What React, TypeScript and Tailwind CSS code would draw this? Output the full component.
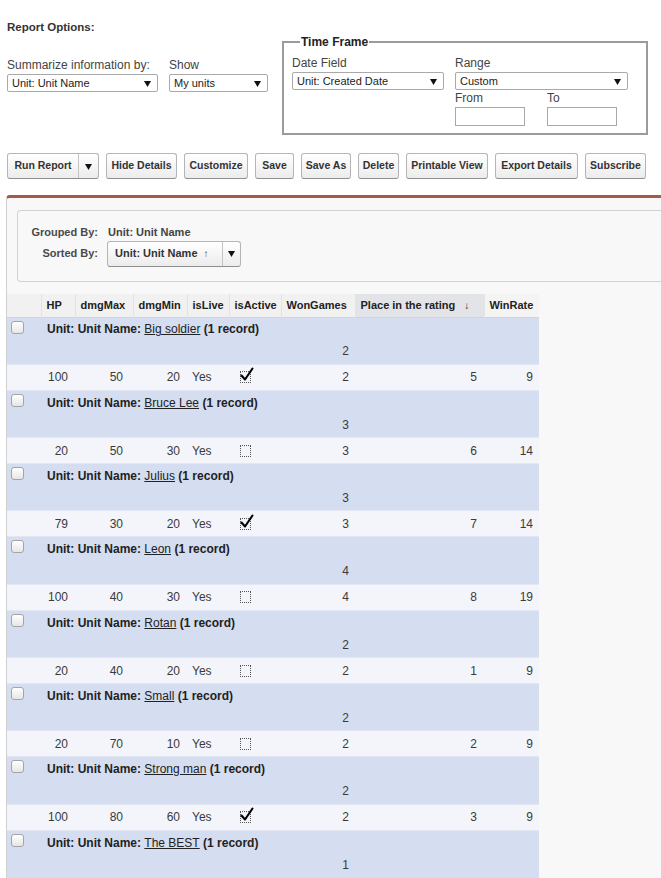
import React from 'react';

type Unit = {
  name: string;
  won: number;
  hp: number;
  max: number;
  min: number;
  active: boolean;
  place: number;
  rate: number;
};

const units: Unit[] = [
  { name: 'Big soldier', won: 2, hp: 100, max: 50, min: 20, active: true, place: 5, rate: 9 },
  { name: 'Bruce Lee', won: 3, hp: 20, max: 50, min: 30, active: false, place: 6, rate: 14 },
  { name: 'Julius', won: 3, hp: 79, max: 30, min: 20, active: true, place: 7, rate: 14 },
  { name: 'Leon', won: 4, hp: 100, max: 40, min: 30, active: false, place: 8, rate: 19 },
  { name: 'Rotan', won: 2, hp: 20, max: 40, min: 20, active: false, place: 1, rate: 9 },
  { name: 'Small', won: 2, hp: 20, max: 70, min: 10, active: false, place: 2, rate: 9 },
  { name: 'Strong man', won: 2, hp: 100, max: 80, min: 60, active: true, place: 3, rate: 9 },
  { name: 'The BEST', won: 1, hp: 100, max: 90, min: 70, active: true, place: 4, rate: 5 },
];

function Arrow({ className = '' }: { className?: string }) {
  return (
    <svg className={`w-[7px] h-[7px] ${className}`} viewBox="0 0 8 8">
      <path d="M0 1h8L4 8z" fill="#111" />
    </svg>
  );
}

function Select({ value, className = '' }: { value: string; className?: string }) {
  return (
    <div
      className={`flex items-center justify-between bg-white border border-[#a9a9a9] rounded-[2px] pl-[4px] pr-[6px] text-[11px] text-[#222] ${className}`}
    >
      <span>{value}</span>
      <Arrow />
    </div>
  );
}

function Btn({ label, className = '' }: { label: string; className?: string }) {
  return (
    <div
      className={`h-[26px] flex items-center justify-center whitespace-nowrap rounded-[3px] border border-[#b5b5b5] border-b-[#8f8f8f] bg-gradient-to-b from-white to-[#ececec] text-[10.5px] font-bold text-[#333] ${className}`}
    >
      {label}
    </div>
  );
}

function GroupCheckbox() {
  return (
    <span className="block w-[13px] h-[13px] rounded-[3px] border border-[#a4a4a4] bg-gradient-to-b from-white to-[#e6e6e6]" />
  );
}

function ActiveBox({ on }: { on: boolean }) {
  return (
    <span className="relative block w-[11px] h-[12px] border border-dotted border-[#555]">
      {on && (
        <svg className="absolute left-[-1px] top-[-5px] w-[14px] h-[15px]" viewBox="0 0 14 15">
          <path d="M1.5 8.5 L5 12.5 L12.5 1.5" fill="none" stroke="#000" strokeWidth="2.1" strokeLinecap="round" strokeLinejoin="round" />
        </svg>
      )}
    </span>
  );
}

export default function App() {
  const th = 'text-left font-bold text-[11px] text-[#222] pl-[5px] border-l border-[#e3e3e3] whitespace-nowrap';
  const num = 'text-right text-[12px] text-[#3a3a3a]';

  return (
    <div className="w-[661px] h-[878px] overflow-hidden bg-white text-[12px] text-[#333] font-['Liberation_Sans',Arial,sans-serif]">
      {/* options */}
      <div className="flex pl-[7px] h-[135px]">
        <div className="w-[275px]">
          <div className="pt-[20px] text-[11.5px] font-bold text-[#333] leading-[14px]">Report Options:</div>
          <div className="flex gap-[11px] mt-[24px]">
            <div>
              <div className="leading-[14px] text-[12px] text-[#444]">Summarize information by:</div>
              <Select value="Unit: Unit Name" className="w-[151px] h-[18px] mt-[2px]" />
            </div>
            <div>
              <div className="leading-[14px] text-[12px] text-[#444]">Show</div>
              <Select value="My units" className="w-[99px] h-[18px] mt-[2px]" />
            </div>
          </div>
        </div>
        <fieldset className="mt-[35px] w-[366px] h-[100px] border-2 border-[#9b9b9b] pl-[8px] pt-[0px]">
          <legend className="ml-[8px] px-[1px] text-[12px] font-bold text-[#222] leading-[14px]">Time Frame</legend>
          <div className="flex gap-[11px] mt-[7px]">
            <div>
              <div className="leading-[14px] text-[12px] text-[#444]">Date Field</div>
              <Select value="Unit: Created Date" className="w-[152px] h-[18px] mt-[2px]" />
            </div>
            <div>
              <div className="leading-[14px] text-[12px] text-[#444]">Range</div>
              <Select value="Custom" className="w-[173px] h-[18px] mt-[2px]" />
              <div className="flex gap-[22px] mt-[1px]">
                <div>
                  <div className="leading-[14px] text-[12px] text-[#444]">From</div>
                  <div className="w-[70px] h-[19px] mt-[2px] border border-[#a9a9a9] bg-white" />
                </div>
                <div>
                  <div className="leading-[14px] text-[12px] text-[#444]">To</div>
                  <div className="w-[70px] h-[19px] mt-[2px] border border-[#a9a9a9] bg-white" />
                </div>
              </div>
            </div>
          </div>
        </fieldset>
      </div>

      {/* buttons */}
      <div className="flex items-center gap-[7px] pl-[7px] mt-[18px]">
        <div className="h-[26px] w-[92px] flex rounded-[3px] border border-[#b5b5b5] border-b-[#8f8f8f] bg-gradient-to-b from-white to-[#ececec] text-[10.5px] font-bold text-[#333]">
          <div className="flex-1 flex items-center justify-center border-r border-[#c4c4c4]">Run Report</div>
          <div className="w-[19px] flex items-center justify-center">
            <Arrow className="w-[6px] h-[6px]" />
          </div>
        </div>
        <Btn label="Hide Details" className="w-[71px]" />
        <Btn label="Customize" className="w-[64px]" />
        <Btn label="Save" className="w-[39px]" />
        <Btn label="Save As" className="w-[50px]" />
        <Btn label="Delete" className="w-[41px]" />
        <Btn label="Printable View" className="w-[82px]" />
        <Btn label="Export Details" className="w-[83px]" />
        <Btn label="Subscribe" className="w-[61px]" />
      </div>

      {/* report panel */}
      <div className="mt-[16px] ml-[6px] border-t-[3px] border-t-[#a45a48] border-l border-l-[#d0d0d0] rounded-tl-[4px] bg-[#f8f8f8] h-[700px]">
        <div className="ml-[10px] mt-[12px] h-[72px] border border-r-0 border-[#d2d2d2] rounded-l-[4px] flex flex-col justify-center gap-[1px] pl-[12px] text-[11px] font-bold text-[#4a4a4a]">
          <div className="flex items-center h-[14px]">
            <span className="w-[68px] text-right">Grouped By:</span>
            <span className="ml-[10px] text-[#444]">Unit: Unit Name</span>
          </div>
          <div className="flex items-center">
            <span className="w-[68px] text-right">Sorted By:</span>
            <div className="ml-[9px] h-[26px] flex rounded-[3px] border border-[#b5b5b5] border-b-[#8f8f8f] bg-gradient-to-b from-white to-[#ececec] text-[#333]">
              <div className="w-[115px] flex items-center pl-[7px] border-r border-[#c4c4c4]">
                Unit: Unit Name <span className="ml-[6px] text-[10px]">↑</span>
              </div>
              <div className="w-[17px] flex items-center justify-center">
                <Arrow className="w-[6px] h-[6px]" />
              </div>
            </div>
          </div>
        </div>

        <table className="mt-[12px] table-fixed border-collapse w-[532px]">
          <colgroup>
            <col className="w-[34px]" />
            <col className="w-[34px]" />
            <col className="w-[58px]" />
            <col className="w-[54px]" />
            <col className="w-[42px]" />
            <col className="w-[52px]" />
            <col className="w-[74px]" />
            <col className="w-[129px]" />
            <col className="w-[55px]" />
          </colgroup>
          <thead>
            <tr className="h-[23px] bg-[#f1f1f1] border-b border-[#c9d3ea]">
              <th className="border-0" />
              <th className={th}>HP</th>
              <th className={th}>dmgMax</th>
              <th className={th}>dmgMin</th>
              <th className={th}>isLive</th>
              <th className={th}>isActive</th>
              <th className={th}>WonGames</th>
              <th className={`${th} bg-[#e2e4e7]`}>
                Place in the rating <span className="ml-[6px] font-normal text-[10px]">↓</span>
              </th>
              <th className={`${th} bg-[#f4f4f4]`}>WinRate</th>
            </tr>
          </thead>
          <tbody>
            {units.map((u, i) => (
              <React.Fragment key={u.name}>
                <tr className="h-[23px] bg-[#d5ddf1]">
                  <td className="pl-[4px] align-top pt-[3px]">
                    <GroupCheckbox />
                  </td>
                  <td colSpan={8} className="pl-[6px] pt-[1px] text-[12px] font-bold text-[#222] whitespace-nowrap">
                    Unit: Unit Name: <span className="font-normal underline">{u.name}</span> (1 record)
                  </td>
                </tr>
                <tr className="h-[24.33px] bg-[#d5ddf1]">
                  <td colSpan={6} />
                  <td className={`${num} pr-[6px] pb-[1px]`}>{u.won}</td>
                  <td colSpan={2} />
                </tr>
                {i < units.length - 1 && (
                  <tr className="h-[26px] bg-[#f3f5fb] border-t border-[#e2e7f3] border-b border-[#c3cadd]">
                    <td />
                    <td className={`${num} pr-[7px]`}>{u.hp}</td>
                    <td className={`${num} pr-[10px]`}>{u.max}</td>
                    <td className={`${num} pr-[7px]`}>{u.min}</td>
                    <td className="pl-[5px] text-[12px] text-[#3a3a3a]">Yes</td>
                    <td className="pl-[11px]">
                      <ActiveBox on={u.active} />
                    </td>
                    <td className={`${num} pr-[6px]`}>{u.won}</td>
                    <td className={`${num} pr-[7px]`}>{u.place}</td>
                    <td className={`${num} pr-[6px]`}>{u.rate}</td>
                  </tr>
                )}
              </React.Fragment>
            ))}
          </tbody>
        </table>
      </div>
    </div>
  );
}
